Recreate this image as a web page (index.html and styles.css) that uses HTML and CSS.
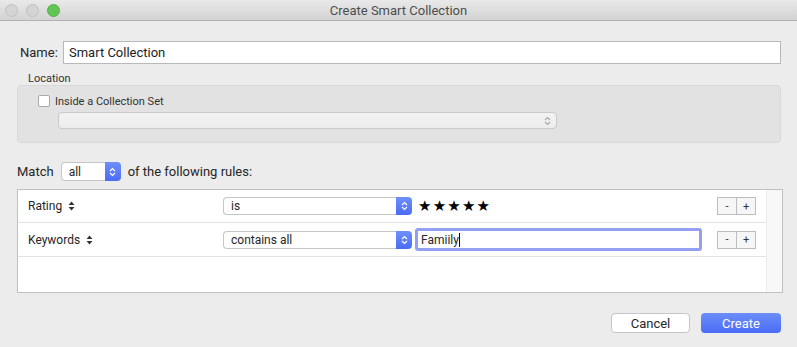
FILE: index.html
```html
<!DOCTYPE html>
<html lang="en">
  <head>
    <meta charset="UTF-8" />
    <title>Create Smart Collection</title>
    <link rel="stylesheet" href="styles.css">
  </head>
  <body>
    <div class="window">
      <div class="titlebar">
        <div class="lights">
          <span class="light"></span>
          <span class="light"></span>
          <span class="light green"></span>
        </div>
        <div class="title">Create Smart Collection</div>
      </div>

      <div class="content">
        <div class="name_row">
          <label class="name_label">Name:</label>
          <div class="name_input">Smart Collection</div>
        </div>

        <p class="location_label">Location</p>
        <div class="location_box">
          <div class="check_row">
            <span class="checkbox"></span>
            <span>Inside a Collection Set</span>
          </div>
          <div class="popup disabled">
            <span></span>
            <svg class="updown" width="7" height="10" viewBox="0 0 7 10">
              <path d="M1 4 L3.5 1.5 L6 4 M1 6 L3.5 8.5 L6 6" fill="none" stroke="#a8a8a8" stroke-width="1.1" />
            </svg>
          </div>
        </div>

        <div class="match_row">
          <span>Match</span>
          <div class="popup match_popup">
            <span class="popup_text">all</span>
            <span class="popup_btn">
              <svg width="7" height="10" viewBox="0 0 7 10">
                <path d="M1 4 L3.5 1.5 L6 4 M1 6 L3.5 8.5 L6 6" fill="none" stroke="#fff" stroke-width="1.2" />
              </svg>
            </span>
          </div>
          <span>of the following rules:</span>
        </div>

        <div class="rules">
          <div class="rule_list">
            <div class="rule">
              <div class="rule_field">
                Rating
                <svg class="sort" width="7" height="10" viewBox="0 0 7 10">
                  <path d="M0.5 4 L3.5 0.5 L6.5 4 Z M0.5 6 L3.5 9.5 L6.5 6 Z" fill="#333" />
                </svg>
              </div>
              <div class="popup rule_popup">
                <span class="popup_text">is</span>
                <span class="popup_btn">
                  <svg width="7" height="10" viewBox="0 0 7 10">
                    <path d="M1 4 L3.5 1.5 L6 4 M1 6 L3.5 8.5 L6 6" fill="none" stroke="#fff" stroke-width="1.2" />
                  </svg>
                </span>
              </div>
              <div class="stars">★★★★★</div>
              <div class="steppers">
                <span class="step">-</span>
                <span class="step">+</span>
              </div>
            </div>

            <div class="rule">
              <div class="rule_field">
                Keywords
                <svg class="sort" width="7" height="10" viewBox="0 0 7 10">
                  <path d="M0.5 4 L3.5 0.5 L6.5 4 Z M0.5 6 L3.5 9.5 L6.5 6 Z" fill="#333" />
                </svg>
              </div>
              <div class="popup rule_popup">
                <span class="popup_text">contains all</span>
                <span class="popup_btn">
                  <svg width="7" height="10" viewBox="0 0 7 10">
                    <path d="M1 4 L3.5 1.5 L6 4 M1 6 L3.5 8.5 L6 6" fill="none" stroke="#fff" stroke-width="1.2" />
                  </svg>
                </span>
              </div>
              <div class="text_field">Famiily<span class="caret"></span></div>
              <div class="steppers">
                <span class="step">-</span>
                <span class="step">+</span>
              </div>
            </div>
          </div>
          <div class="scroller"></div>
        </div>

        <div class="actions">
          <span class="button">Cancel</span>
          <span class="button primary">Create</span>
        </div>
      </div>
    </div>
  </body>
</html>
```

FILE: styles.css
```css
html,
body,
div,
span,
p,
label {
  margin: 0;
  padding: 0;
  border: 0;
}

body {
  width: 797px;
  height: 347px;
  overflow: hidden;
  background: #ececec;
  font-family: Roboto, "Liberation Sans", sans-serif;
  font-size: 13px;
  color: #262626;
  line-height: 1;
}

.window {
  height: 100%;
}

/* title bar */
.titlebar {
  height: 20px;
  background: linear-gradient(#e9e9e9, #d3d3d3);
  border-bottom: 1px solid #b1b1b1;
  display: flex;
  align-items: center;
  position: relative;
}
.lights {
  display: flex;
  gap: 8px;
  padding-left: 5px;
}
.light {
  width: 11px;
  height: 11px;
  border-radius: 50%;
  background: #d4d4d4;
  border: 1px solid #c0c0c0;
}
.light.green {
  background: #62c655;
  border-color: #55b048;
}
.title {
  position: absolute;
  left: 0;
  right: 0;
  text-align: center;
  color: #4d4d4d;
  font-size: 13px;
}

/* body */
.content {
  padding: 20px 16px 0 17px;
}
.name_row {
  display: flex;
  align-items: center;
  padding-left: 3px;
}
.name_label {
  width: 43px;
}
.name_input {
  flex: 1;
  height: 21px;
  line-height: 21px;
  background: #fff;
  border: 1px solid #b9b9b9;
  padding-left: 5px;
  font-size: 13px;
  color: #222;
}

.location_label {
  font-size: 11px;
  color: #333;
  padding: 9px 0 0 11px;
  height: 12px;
}
.location_box {
  margin-top: 0;
  height: 56px;
  background: #e2e2e2;
  border: 1px solid #d9d9d9;
  border-radius: 4px;
  padding: 0 0 0 20px;
}
.check_row {
  display: flex;
  align-items: center;
  gap: 5px;
  margin-top: 9px;
  font-size: 11px;
  color: #333;
}
.checkbox {
  width: 10px;
  height: 10px;
  background: #fff;
  border: 1px solid #a9a9a9;
  border-radius: 2px;
}
.popup {
  display: flex;
  align-items: center;
  border-radius: 4px;
  box-sizing: border-box;
}
.popup.disabled {
  width: 499px;
  height: 17px;
  margin: 5px 0 0 20px;
  background: linear-gradient(#f3f3f3, #ececec);
  border: 1px solid #cacaca;
  justify-content: flex-end;
  padding-right: 5px;
}

.match_row {
  display: flex;
  align-items: center;
  gap: 7px;
  margin-top: 19px;
  font-size: 13px;
  color: #262626;
}
.match_popup {
  width: 60px;
  height: 19px;
  margin-left: 0;
}
.popup_text {
  flex: 1;
  height: 100%;
  box-sizing: border-box;
  background: #fff;
  border: 1px solid #c6c6c6;
  border-right: 0;
  border-radius: 4px 0 0 4px;
  display: flex;
  align-items: center;
  padding-left: 7px;
  font-size: 12px;
  color: #262626;
}
.popup_btn {
  width: 16px;
  height: 100%;
  background: linear-gradient(#6e8ff9, #4a6cf6);
  border-radius: 0 4px 4px 0;
  display: flex;
  align-items: center;
  justify-content: center;
}

/* rules table */
.rules {
  margin-top: 8px;
  width: 764px;
  height: 102px;
  background: #fff;
  border: 1px solid #c0c0c0;
  display: flex;
}
.rule_list {
  flex: 1;
}
.scroller {
  width: 15px;
  background: #f8f8f8;
  border-left: 1px solid #ececec;
}
.rule {
  display: flex;
  align-items: center;
  height: 32px;
  border-bottom: 1px solid #e2e2e2;
  padding: 0 10px 0 10px;
}
.rule + .rule {
  height: 33px;
}
.rule_field {
  width: 195px;
  display: flex;
  align-items: center;
  gap: 6px;
  font-size: 12px;
  color: #262626;
}
.rule_popup {
  width: 189px;
  height: 18px;
}
.stars {
  margin-left: 6px;
  font-size: 15px;
  letter-spacing: 1.2px;
  color: #000;
  font-family: "DejaVu Sans", sans-serif;
}
.text_field {
  margin-left: 3px;
  width: 278px;
  height: 17px;
  border: 3px solid #959ff2;
  border-radius: 3px;
  background: #fff;
  display: flex;
  align-items: center;
  padding-left: 3px;
  font-size: 12px;
  color: #262626;
}
.caret {
  width: 1px;
  height: 14px;
  background: #000;
}
.steppers {
  margin-left: auto;
  display: flex;
}
.step {
  width: 18px;
  height: 16px;
  border: 1px solid #bdbdbd;
  background: #f6f6f6;
  display: flex;
  align-items: center;
  justify-content: center;
  font-size: 11px;
  color: #333;
}
.step + .step {
  border-left: 0;
}

/* buttons */
.actions {
  display: flex;
  justify-content: flex-end;
  gap: 11px;
  margin-top: 20px;
}
.button {
  width: 79px;
  height: 20px;
  box-sizing: border-box;
  border: 1px solid #c6c6c6;
  border-radius: 4px;
  background: #fff;
  display: flex;
  align-items: center;
  justify-content: center;
  font-size: 13px;
  color: #262626;
}
.button.primary {
  width: 80px;
  border: 0;
  background: linear-gradient(#6b8ef9, #4a6cf6);
  color: #fff;
}
```
